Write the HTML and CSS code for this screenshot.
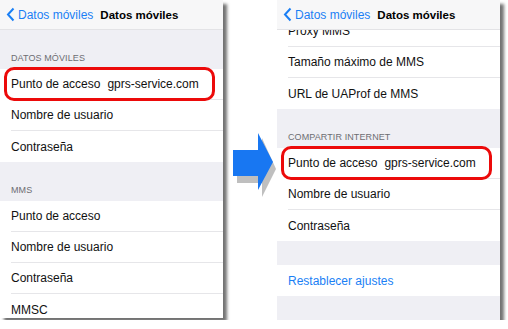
FILE: index.html
```html
<!DOCTYPE html>
<html lang="es">
<head>
  <meta charset="UTF-8" />
  <title>Datos móviles - APN</title>
  <link rel="stylesheet" href="styles.css">
</head>
<body>

  <div class="stage">

    <section class="phone phone-left">
      <div class="navbar">
        <a href="#" class="back">
          <svg class="chevron" width="9" height="15" viewBox="0 0 9 15"><polyline points="7.5,1.5 2,7.5 7.5,13.5" fill="none" stroke="#1a7ff5" stroke-width="2"/></svg>
          Datos móviles
        </a>
        <span class="title">Datos móviles</span>
      </div>
      <div class="screen">
        <div class="group-label">DATOS MÓVILES</div>
        <ul class="group">
          <li class="row highlight">Punto de acceso<span class="value">gprs-service.com</span></li>
          <li class="row">Nombre de usuario</li>
          <li class="row">Contraseña</li>
        </ul>
        <div class="group-label">MMS</div>
        <ul class="group">
          <li class="row">Punto de acceso</li>
          <li class="row">Nombre de usuario</li>
          <li class="row">Contraseña</li>
          <li class="row">MMSC</li>
        </ul>
      </div>
    </section>

    <div class="arrow">
      <svg width="46" height="66" viewBox="0 0 46 66">
        <polygon points="6,23 31,23 31,6 45,37 31,65 31,51 6,51" fill="#8a8a8a" opacity="0.55"/>
        <polygon points="2,18 27,18 27,1 42,30 27,58 27,44 2,44" fill="#1877f2"/>
      </svg>
    </div>

    <section class="phone phone-right">
      <div class="navbar">
        <a href="#" class="back">
          <svg class="chevron" width="9" height="15" viewBox="0 0 9 15"><polyline points="7.5,1.5 2,7.5 7.5,13.5" fill="none" stroke="#1a7ff5" stroke-width="2"/></svg>
          Datos móviles
        </a>
        <span class="title">Datos móviles</span>
      </div>
      <div class="screen">
        <div class="scrolled">
          <ul class="group">
            <li class="row">Proxy MMS</li>
            <li class="row">Tamaño máximo de MMS</li>
            <li class="row">URL de UAProf de MMS</li>
          </ul>
          <div class="group-label">COMPARTIR INTERNET</div>
          <ul class="group">
            <li class="row highlight">Punto de acceso<span class="value">gprs-service.com</span></li>
            <li class="row">Nombre de usuario</li>
            <li class="row">Contraseña</li>
          </ul>
          <div class="spacer"></div>
          <ul class="group">
            <li class="row link">Restablecer ajustes</li>
          </ul>
        </div>
      </div>
    </section>

  </div>

</body>
</html>
```

FILE: styles.css
```css
body {
  margin: 0;
  background: #fff;
  font-family: "Liberation Sans", Arial, sans-serif;
  color: #111;
}

.stage {
  display: flex;
  align-items: flex-start;
}

.phone {
  background: #efeff4;
  overflow: hidden;
  display: flex;
  flex-direction: column;
  box-shadow: 4px 4px 3px rgba(0, 0, 0, 0.55);
}

.phone-left {
  width: 223px;
  height: 318px;
}

.phone-right {
  width: 223px;
  height: 320px;
}

.navbar {
  height: 30px;
  flex: none;
  display: flex;
  align-items: center;
  gap: 7px;
  padding-left: 6px;
  background: #f7f7f8;
  border-bottom: 1px solid #e3e3e6;
  box-sizing: border-box;
  position: relative;
  z-index: 1;
}

.back {
  display: flex;
  align-items: center;
  gap: 3px;
  color: #1a7ff5;
  text-decoration: none;
  font-size: 12px;
}

.chevron {
  display: block;
}

.title {
  font-weight: bold;
  font-size: 11.5px;
  color: #000;
}

.screen {
  flex: 1;
  overflow: hidden;
}

.scrolled {
  margin-top: -14px;
}

.group-label {
  height: 39px;
  box-sizing: border-box;
  padding: 0 11px 6px;
  display: flex;
  align-items: flex-end;
  font-size: 9px;
  color: #6d6d72;
  letter-spacing: 0.1px;
}

.group {
  list-style: none;
  margin: 0;
  padding: 0 0 0 11px;
  background: #fff;
}

.row {
  height: 31px;
  display: flex;
  align-items: center;
  font-size: 12px;
  border-bottom: 1px solid #e6e6e9;
  box-sizing: border-box;
  position: relative;
}

.group .row:last-child {
  border-bottom: none;
}

.value {
  margin-left: 7px;
}

.highlight::after {
  content: "";
  position: absolute;
  left: -7px;
  right: 8px;
  top: -2px;
  bottom: -2px;
  border: 3px solid #ec0a0a;
  border-radius: 10px;
}

.spacer {
  height: 24px;
}

.link {
  color: #1a7ff5;
}

.arrow {
  width: 54px;
  flex: none;
  padding-top: 132px;
  padding-left: 8px;
  box-sizing: border-box;
}

.arrow svg {
  display: block;
}
```
